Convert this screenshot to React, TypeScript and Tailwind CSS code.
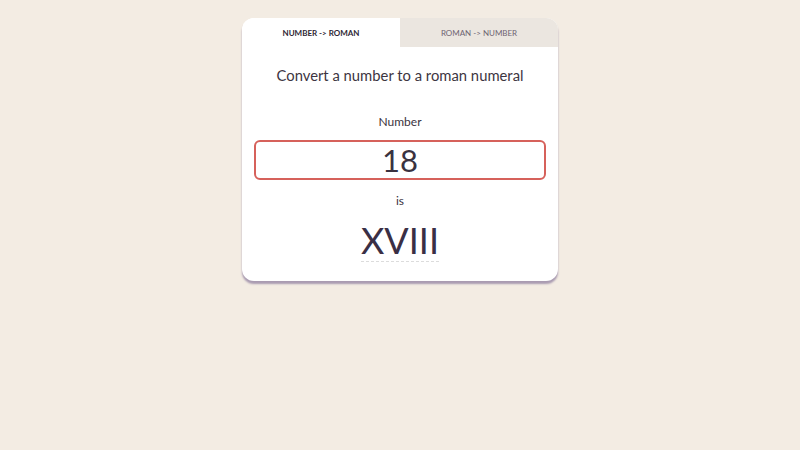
import { useState } from "react";

function toRoman(n: number) {
  const table: [number, string][] = [
    [1000, "M"], [900, "CM"], [500, "D"], [400, "CD"], [100, "C"], [90, "XC"],
    [50, "L"], [40, "XL"], [10, "X"], [9, "IX"], [5, "V"], [4, "IV"], [1, "I"],
  ];
  let out = "";
  for (const [v, s] of table) {
    while (n >= v) {
      out += s;
      n -= v;
    }
  }
  return out;
}

export default function App() {
  const [value, setValue] = useState("18");
  const roman = toRoman(parseInt(value, 10) || 0);

  return (
    <div className="min-h-[450px] w-full bg-[#f3ece3] pt-[18px] font-['Lato','Liberation_Sans',sans-serif] text-[#3b3340]">
      <div className="mx-auto w-[316px] overflow-hidden rounded-[12px] bg-white shadow-[0_3px_2px_#a99bb1]">
        <div className="grid h-[29px] grid-cols-2 text-[8px]">
          <button className="flex items-center justify-center bg-white font-bold uppercase text-[#2e2633]">
            Number -&gt; Roman
          </button>
          <button className="flex items-center justify-center bg-[#ebe6e0] uppercase text-[#6e6472]">
            Roman -&gt; Number
          </button>
        </div>

        <div className="flex flex-col items-center px-3 pb-[19px] pt-[17px]">
          <h1 className="text-[14.8px] leading-[22px] text-[#3d3542]">Convert a number to a roman numeral</h1>

          <label className="mt-[27px] text-[12px] leading-[18px]">Number</label>
          <input
            value={value}
            onChange={(e) => setValue(e.target.value)}
            className="mt-[9px] h-[40px] w-full rounded-[6px] border-2 border-[#d6615b] text-center text-[31px] leading-none text-[#3a3240] outline-none"
          />

          <span className="mt-[12px] text-[12px] leading-[18px]">is</span>

          <span className="mt-[12px] inline-block border-b border-dashed border-[#dcdcdc] pb-[3px] text-[36px] leading-[36px] text-[#3a2f45]">
            {roman}
          </span>
        </div>
      </div>
    </div>
  );
}
